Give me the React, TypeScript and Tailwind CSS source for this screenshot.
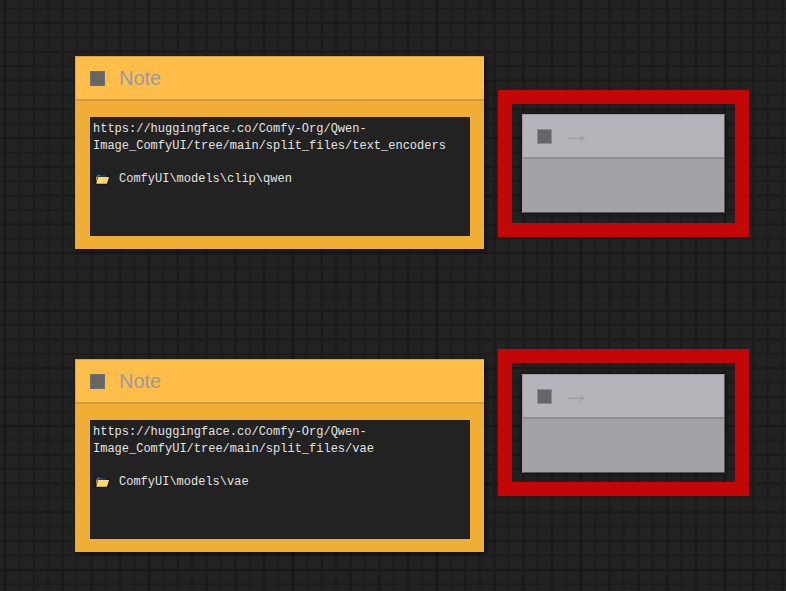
const FolderIcon = () => (
  <svg width="15" height="12" viewBox="0 0 15 12" className="shrink-0">
    <path d="M0.500 1H5l1 1h6v1.500h2.800L12.300 11.500H0.500z" fill="#0d0d0d" />
    <path d="M1.200 1.500h3.500l1 1h5.500V3.500H2.500z" fill="#2c6ea8" />
    <path d="M1.200 3.500h1.800L1.200 9z" fill="#e0a93f" />
    <path d="M3.200 3.900h10.900L11.900 10.800H1.200z" fill="#ffd872" />
  </svg>
);

function NoteNode({ top, lines, path }: { top: string; lines: string[]; path: string }) {
  return (
    <div className={`absolute left-[75px] ${top} w-[409px] h-[193px] flex flex-col bg-[#f1ae36] border-t border-l border-[#dba240] shadow-[2px_2px_5px_rgba(0,0,0,0.55)]`}>
      <div className="h-[44px] shrink-0 flex items-center gap-[14px] pl-[14px] bg-[#ffbd4a] border-b-2 border-[#cf9a40]">
        <span className="w-[15px] h-[15px] bg-[#666668] border border-[#6f6f70]" />
        <span className="text-[20px] text-[#9b9aa0] font-['Liberation_Sans',sans-serif]">Note</span>
      </div>
      <div className="flex-1 ml-[14px] mr-[14px] mt-[16px] mb-[13px] bg-[#222222] px-[3px] pt-[4px] text-[12px] leading-[16.5px] text-[#e4e4e4] font-['Liberation_Mono',monospace]">
        {lines.map(l => <div key={l}>{l}</div>)}
        <div className="h-[16.5px]" />
        <div className="flex items-center gap-[9px] pl-[2px]">
          <FolderIcon />
          <span>{path}</span>
        </div>
      </div>
    </div>
  );
}

function RerouteGroup({ top, nudge }: { top: string; nudge?: boolean }) {
  return (
    <div className={`absolute left-[498px] ${top} w-[251px] h-[147px] border-[14px] border-[#c30606] flex items-center justify-center ${nudge ? 'pt-[2px]' : ''}`}>
      <div className="w-[203px] h-[99px] flex flex-col bg-[#a3a2a7] border border-[#9a999e] border-r-[#5c5c60] border-b-[#57575b] shadow-[0_0_7px_rgba(0,0,0,0.6)]">
        <div className="h-[44px] shrink-0 flex items-center gap-[10px] pl-[14px] bg-[#b5b4ba] border-b-2 border-[#8f8e93]">
          <span className="w-[15px] h-[15px] bg-[#666668] border border-[#8b8b8e]" />
          <span className="text-[28px] leading-none -mt-[5px] text-[#9f9ea4] font-['Liberation_Sans',sans-serif]">→</span>
        </div>
      </div>
    </div>
  );
}

export default function App() {
  return (
    <div className="relative w-[786px] h-[591px] overflow-hidden bg-[#222222] bg-[linear-gradient(#181818_2px,transparent_2px),linear-gradient(90deg,#181818_2px,transparent_2px),linear-gradient(#1a1a1a_2px,transparent_2px),linear-gradient(90deg,#1a1a1a_2px,transparent_2px),linear-gradient(#1c1c1c_2px,transparent_2px),linear-gradient(90deg,#1c1c1c_2px,transparent_2px)] bg-[length:144px_144px,144px_144px,28.8px_28.8px,28.8px_28.8px,14.4px_14.4px,14.4px_14.4px] bg-[position:0_137px,4px_0,0_137px,4px_0,0_137px,4px_0]">
      <NoteNode
        top="top-[56px]"
        lines={['https://huggingface.co/Comfy-Org/Qwen-', 'Image_ComfyUI/tree/main/split_files/text_encoders']}
        path="ComfyUI\models\clip\qwen"
      />
      <NoteNode
        top="top-[359px]"
        lines={['https://huggingface.co/Comfy-Org/Qwen-', 'Image_ComfyUI/tree/main/split_files/vae']}
        path="ComfyUI\models\vae"
      />
      <RerouteGroup top="top-[90px]" />
      <RerouteGroup top="top-[349px]" nudge />
    </div>
  );
}
